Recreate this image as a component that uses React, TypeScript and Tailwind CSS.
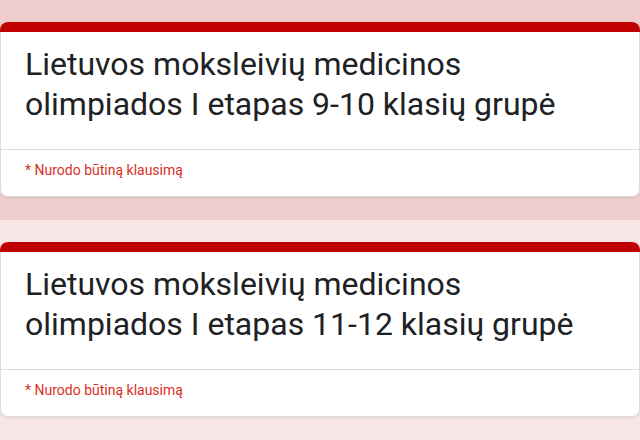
const forms = [
  "Lietuvos moksleivių medicinos olimpiados I etapas 9-10 klasių grupė",
  "Lietuvos moksleivių medicinos olimpiados I etapas 11-12 klasių grupė",
];

function FormHeader({ title }: { title: string }) {
  return (
    <div className="rounded-lg bg-white shadow-[0_1px_2px_rgba(0,0,0,0.1)]">
      <div className="h-[10px] rounded-t-lg bg-[#c00000]" />
      <div className="rounded-b-lg border-x border-b border-[#dadce0]">
        <div className="px-6 pt-3 pb-[25px]">
          <h1 className="text-[32px] leading-[40px] text-[#202124]">{title}</h1>
        </div>
        <div className="border-t border-[#dadce0] px-6 pt-[10px] pb-4">
          <p className="text-sm leading-5 text-[#d93025]">* Nurodo būtiną klausimą</p>
        </div>
      </div>
    </div>
  );
}

export default function App() {
  return (
    <div className="w-[640px] font-['Roboto',sans-serif]">
      {forms.map((title, i) => (
        <div
          key={title}
          className={i === 0 ? "h-[220px] bg-[#f0cdcd] pt-[22px]" : "h-[220px] bg-[#f8e5e5] pt-[22px]"}
        >
          <FormHeader title={title} />
        </div>
      ))}
    </div>
  );
}
